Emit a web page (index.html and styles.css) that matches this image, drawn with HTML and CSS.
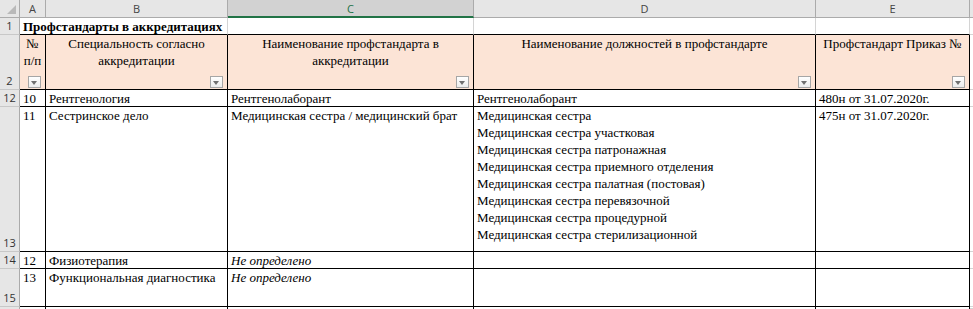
FILE: index.html
```html
<!DOCTYPE html>
<html lang="ru">
<head>
<meta charset="utf-8">
<title>Профстандарты</title>
<link rel="stylesheet" href="styles.css">
</head>
<body>
<div class="sheet">
  <!-- column headers -->
  <div class="ch corner"><span class="corner-tri"></span></div>
  <div class="ch">A</div>
  <div class="ch">B</div>
  <div class="ch sel">C</div>
  <div class="ch">D</div>
  <div class="ch">E</div>
  <div class="ch tail"></div>

  <!-- row 1 -->
  <div class="rh">1</div>
  <div class="c r1 span2 bold">Профстандарты в аккредитациях</div>
  <div class="c r1"></div>
  <div class="c r1"></div>
  <div class="c r1"></div>
  <div class="tailc"></div>

  <!-- row 2 -->
  <div class="rh">2</div>
  <div class="c hd">№<br>п/п<span class="fb"></span></div>
  <div class="c hd">Специальность согласно<br>аккредитации<span class="fb"></span></div>
  <div class="c hd">Наименование профстандарта в<br>аккредитации<span class="fb"></span></div>
  <div class="c hd">Наименование должностей в профстандарте<span class="fb"></span></div>
  <div class="c hd">Профстандарт Приказ №<span class="fb"></span></div>
  <div class="tailc"></div>

  <!-- row 12 -->
  <div class="rh">12</div>
  <div class="c">10</div>
  <div class="c">Рентгенология</div>
  <div class="c">Рентгенолаборант</div>
  <div class="c">Рентгенолаборант</div>
  <div class="c">480н от 31.07.2020г.</div>
  <div class="tailc"></div>

  <!-- row 13 -->
  <div class="rh">13</div>
  <div class="c">11</div>
  <div class="c">Сестринское дело</div>
  <div class="c">Медицинская сестра / медицинский брат</div>
  <div class="c">Медицинская сестра<br>Медицинская сестра участковая<br>Медицинская сестра патронажная<br>Медицинская сестра приемного отделения<br>Медицинская сестра палатная (постовая)<br>Медицинская сестра перевязочной<br>Медицинская сестра процедурной<br>Медицинская сестра стерилизационной</div>
  <div class="c">475н от 31.07.2020г.</div>
  <div class="tailc"></div>

  <!-- row 14 -->
  <div class="rh">14</div>
  <div class="c">12</div>
  <div class="c">Физиотерапия</div>
  <div class="c it">Не определено</div>
  <div class="c"></div>
  <div class="c"></div>
  <div class="tailc"></div>

  <!-- row 15 -->
  <div class="rh">15</div>
  <div class="c">13</div>
  <div class="c">Функциональная диагностика</div>
  <div class="c it">Не определено</div>
  <div class="c"></div>
  <div class="c"></div>
  <div class="tailc"></div>

  <!-- partial row 16 -->
  <div class="rh last"></div>
  <div class="c last"></div>
  <div class="c last"></div>
  <div class="c last"></div>
  <div class="c last"></div>
  <div class="c last"></div>
  <div class="tailc"></div>
</div>
</body>
</html>
```

FILE: styles.css
```css
html, body {
  margin: 0;
  padding: 0;
  background: #ffffff;
}

.sheet {
  display: grid;
  grid-template-columns: 20px 26px 182px 246px 342px 154px 3px;
  grid-template-rows: 18px 17px 55px 17px 145px 17px 38px 2px;
  width: 973px;
  height: 309px;
  overflow: hidden;
  font-family: "Liberation Serif", "Times New Roman", serif;
  font-size: 13px;
  line-height: 17px;
  color: #000;
}

.ch {
  box-sizing: border-box;
  background: #e6e6e6;
  border-right: 1px solid #ababab;
  border-bottom: 1px solid #ababab;
  font-family: "Open Sans", "Noto Sans", sans-serif;
  font-size: 11px;
  color: #444;
  display: flex;
  align-items: center;
  justify-content: center;
  line-height: 1;
}

.ch.sel {
  background: #d2d2d2;
  color: #217346;
  border-bottom: 2px solid #217346;
}

.ch.tail {
  border-right: none;
}

.corner {
  position: relative;
}

.corner-tri {
  position: absolute;
  right: 3px;
  bottom: 3px;
  width: 0;
  height: 0;
  border-left: 9px solid transparent;
  border-bottom: 9px solid #b9b9b9;
}

.rh {
  box-sizing: border-box;
  background: #e6e6e6;
  border-right: 1px solid #ababab;
  border-bottom: 1px solid #c8c8c8;
  font-family: "Open Sans", "Noto Sans", sans-serif;
  font-size: 11px;
  color: #333;
  display: flex;
  align-items: flex-end;
  justify-content: center;
  line-height: 16px;
}

.rh.last {
  border-bottom: none;
}

.c {
  box-sizing: border-box;
  border-right: 1px solid #000;
  border-bottom: 1px solid #000;
  padding: 0 3px;
  white-space: nowrap;
  overflow: hidden;
  position: relative;
}

.c.last {
  border-bottom: none;
}

.r1 {
  border-right: 1px solid #d4d4d4;
}

.span2 {
  grid-column: span 2;
  border-right: 1px solid #d4d4d4;
}

.bold {
  font-weight: bold;
}

.it {
  font-style: italic;
}

.hd {
  background: #fce4d6;
  text-align: center;
}

.tailc {
  background: #fff;
  border-bottom: 1px solid #d4d4d4;
  box-sizing: border-box;
}

.fb {
  position: absolute;
  right: 4px;
  bottom: 1px;
  width: 13px;
  height: 12px;
  box-sizing: border-box;
  border: 1px solid #a6a6a6;
  background: linear-gradient(#ffffff, #ececec);
}

.fb::after {
  content: "";
  position: absolute;
  left: 2px;
  top: 4px;
  width: 0;
  height: 0;
  border-left: 3.5px solid transparent;
  border-right: 3.5px solid transparent;
  border-top: 4px solid #707070;
}
```
